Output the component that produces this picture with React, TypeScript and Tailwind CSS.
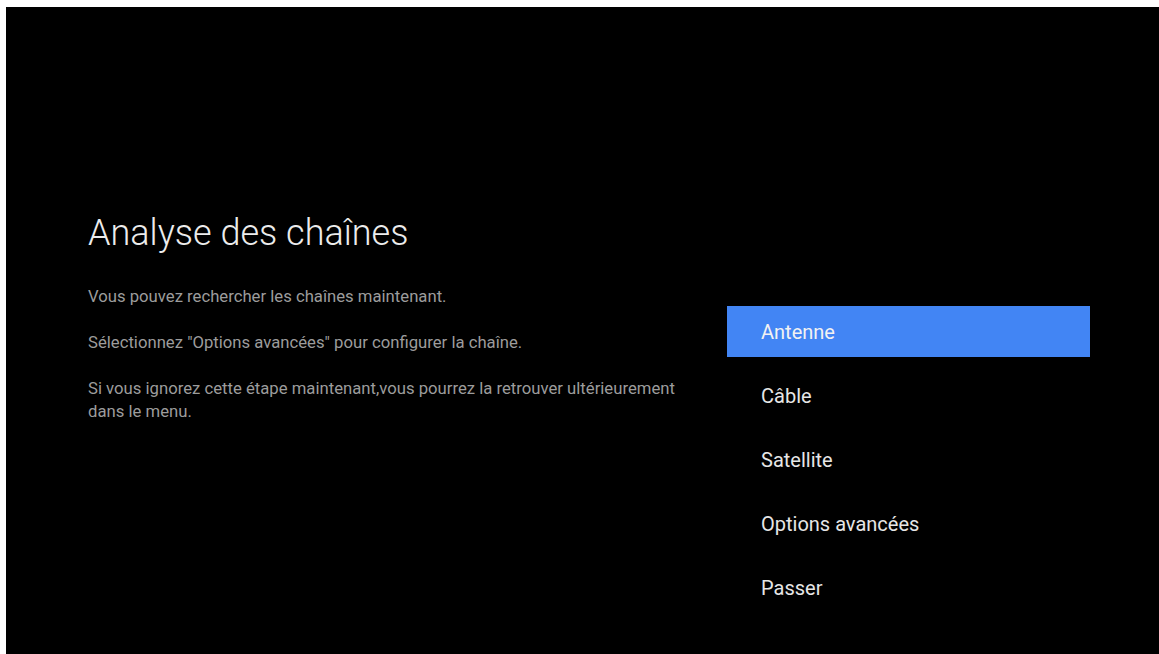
import React from 'react';

const menuItems = ['Antenne', 'Câble', 'Satellite', 'Options avancées', 'Passer'];

export default function App() {
  const selected = 0;

  return (
    <div className="w-[1159px] h-[654px] bg-white pt-[7px] pl-[6px] overflow-hidden" style={{ fontFamily: 'Roboto, "Noto Sans", sans-serif' }}>
      <div className="h-[647px] w-full bg-black flex items-start">
        {/* left: title and explanation */}
        <div className="w-[612px] ml-[82px] pt-[205px]">
          <h1 className="text-[36px] leading-[42px] font-light text-[#ececec]">Analyse des chaînes</h1>
          <div className="mt-[31px] text-[16.7px] leading-[23px] text-[#9c9c9c]">
            <p>Vous pouvez rechercher les chaînes maintenant.</p>
            <p className="mt-[23px]">Sélectionnez "Options avancées" pour configurer la chaîne.</p>
            <p className="mt-[23px]">Si vous ignorez cette étape maintenant,vous pourrez la retrouver ultérieurement dans le menu.</p>
          </div>
        </div>

        {/* right: source list */}
        <div className="ml-auto mr-[69px] w-[363px] pt-[299px] flex flex-col gap-[13px]">
          {menuItems.map((item, index) => (
            <div
              key={item}
              className={
                index === selected
                  ? 'h-[51px] flex items-center pl-[34px] text-[20px] text-[#f2f2f2] bg-[#4285f4]'
                  : 'h-[51px] flex items-center pl-[34px] text-[20px] text-[#e6e6e6]'
              }
            >
              {item}
            </div>
          ))}
        </div>
      </div>
    </div>
  );
}
